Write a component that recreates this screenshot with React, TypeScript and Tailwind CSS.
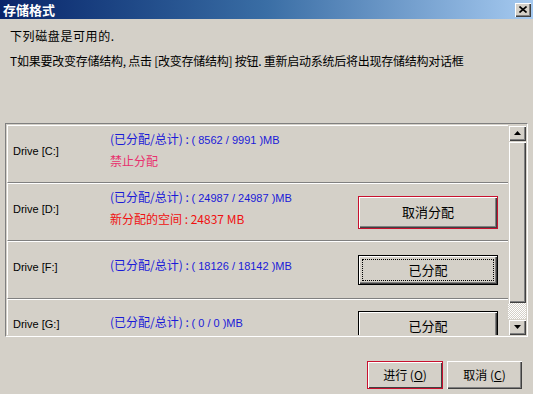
import React from 'react';

const cjk = { fontFamily: '"Noto Sans CJK SC", "Liberation Sans", sans-serif' };
const latin = { fontFamily: '"Liberation Sans", "Noto Sans CJK SC", sans-serif' };

type Drive = {
  name: string;
  used: string;
  note?: { text: string; tone: 'pink' | 'red' };
  button?: { label: string; kind: 'default' | 'focus' | 'plain' };
};

const drives: Drive[] = [
  { name: 'Drive [C:]', used: '( 8562 / 9991 )MB', note: { text: '禁止分配', tone: 'pink' } },
  {
    name: 'Drive [D:]',
    used: '( 24987 / 24987 )MB',
    note: { text: '新分配的空间 : 24837 MB', tone: 'red' },
    button: { label: '取消分配', kind: 'default' }
  },
  { name: 'Drive [F:]', used: '( 18126 / 18142 )MB', button: { label: '已分配', kind: 'focus' } },
  { name: 'Drive [G:]', used: '( 0 / 0 )MB', button: { label: '已分配', kind: 'plain' } }
];

function WinButton({ label, kind }: { label: string; kind: 'default' | 'focus' | 'plain' }) {
  if (kind === 'default') {
    return (
      <div className="flex h-[33px] w-[140px] items-center justify-center border border-[#c8102e] bg-[#d4d0c8] shadow-[inset_1px_1px_0_#ffffff,inset_-1px_-1px_0_#404040,inset_-2px_-2px_0_#808080]">
        <span className="text-[13px] text-black" style={cjk}>
          {label}
        </span>
      </div>
    );
  }
  return (
    <div className="flex h-[30px] w-[140px] items-center justify-center border border-black bg-[#d4d0c8] p-[3px] shadow-[inset_1px_1px_0_#ffffff,inset_-1px_-1px_0_#404040,inset_-2px_-2px_0_#808080]">
      <div
        className={
          'flex h-full w-full items-center justify-center ' +
          (kind === 'focus' ? 'border border-dotted border-black' : '')
        }
      >
        <span className="text-[13px] text-black" style={cjk}>
          {label}
        </span>
      </div>
    </div>
  );
}

function DriveRow({ drive, last }: { drive: Drive; last?: boolean }) {
  return (
    <div
      className={
        'flex shrink-0 items-center border-l border-t border-l-white border-t-white ' +
        (last ? 'h-[40px] items-start pt-[11px]' : 'h-[58px] border-b border-b-[#808080]')
      }
    >
      <div className="relative top-[-3px] w-[102px] shrink-0 pl-[5px] text-[11px] text-black" style={latin}>
        <span className={last ? 'relative top-[8px]' : ''}>{drive.name}</span>
      </div>
      <div className={'relative flex w-[248px] shrink-0 flex-col gap-[5px] ' + (last ? 'top-[3px]' : 'top-[-5px]')}>
        <div className="text-[12px] leading-[15px] text-[#1a1ad8]" style={cjk}>
          (已分配/总计) : <span style={latin} className="text-[11px]">{drive.used}</span>
        </div>
        {drive.note ? (
          <div
            className={
              'text-[12px] leading-[15px] ' +
              (drive.note.tone === 'pink' ? 'text-[#e8306e]' : 'text-[#f01010]')
            }
            style={cjk}
          >
            {drive.note.text}
          </div>
        ) : null}
      </div>
      {drive.button ? <WinButton label={drive.button.label} kind={drive.button.kind} /> : null}
    </div>
  );
}

function ScrollArrow({ up }: { up?: boolean }) {
  return (
    <div className="flex h-[16px] w-full shrink-0 items-center justify-center bg-[#d4d0c8] shadow-[inset_1px_1px_0_#d4d0c8,inset_2px_2px_0_#ffffff,inset_-1px_-1px_0_#404040,inset_-2px_-2px_0_#808080]">
      <svg width="7" height="4" viewBox="0 0 7 4">
        {up ? <path d="M3.5 0 L7 4 L0 4 Z" fill="#000" /> : <path d="M0 0 L7 0 L3.5 4 Z" fill="#000" />}
      </svg>
    </div>
  );
}

export default function App() {
  return (
    <div className="flex h-[394px] w-[533px] flex-col overflow-hidden bg-[#d4d0c8]">
      <div className="flex h-[19px] shrink-0 items-center justify-between bg-gradient-to-r from-[#0a246a] via-[#3a6ea5] to-[#a6caf0] pl-[3px] pr-[2px]">
        <span className="text-[13px] font-bold leading-none text-white" style={cjk}>
          存储格式
        </span>
        <div className="flex h-[14px] w-[16px] items-center justify-center bg-[#d4d0c8] shadow-[inset_1px_1px_0_#ffffff,inset_-1px_-1px_0_#404040,inset_-2px_-2px_0_#808080]">
          <svg width="8" height="7" viewBox="0 0 8 7">
            <path d="M0.5 0.5 L7.5 6.5 M7.5 0.5 L0.5 6.5" stroke="#000" strokeWidth="1.6" />
          </svg>
        </div>
      </div>

      <div className="flex flex-col gap-[9px] pl-[10px] pt-[9px]">
        <div className="text-[12px] leading-[16px] tracking-[0.6px] text-black" style={cjk}>
          下列磁盘是可用的.
        </div>
        <div className="text-[12px] leading-[16px] tracking-[-0.25px] text-black" style={cjk}>
          T如果要改变存储结构, 点击 [改变存储结构] 按钮. 重新启动系统后将出现存储结构对话框
        </div>
      </div>

      <div className="ml-[5px] mt-[54px] flex h-[214px] w-[523px] shrink-0 border border-b-white border-l-[#808080] border-r-white border-t-[#808080] p-[1px]">
        <div className="flex min-w-0 flex-1 flex-col overflow-hidden">
          {drives.map((d, i) => (
            <DriveRow key={d.name} drive={d} last={i === drives.length - 1} />
          ))}
        </div>
        <div className="flex w-[18px] shrink-0 flex-col">
          <ScrollArrow up />
          <div className="h-[162px] shrink-0 bg-[#d4d0c8] shadow-[inset_1px_1px_0_#d4d0c8,inset_2px_2px_0_#ffffff,inset_-1px_-1px_0_#404040,inset_-2px_-2px_0_#808080]" />
          <div className="flex-1 bg-[repeating-conic-gradient(#ffffff_0_25%,#d4d0c8_0_50%)] bg-[length:2px_2px]" />
          <ScrollArrow />
        </div>
      </div>

      <div className="mt-[24px] flex justify-end gap-[4px] pr-[11px]">
        <div className="flex h-[28px] w-[76px] items-center justify-center border border-[#c8102e] bg-[#d4d0c8] shadow-[inset_1px_1px_0_#ffffff,inset_-1px_-1px_0_#404040]">
          <span className="text-[12px] text-black" style={cjk}>
            进行 (<span className="underline">O</span>)
          </span>
        </div>
        <div className="flex h-[28px] w-[75px] items-center justify-center bg-[#d4d0c8] shadow-[inset_1px_1px_0_#ffffff,inset_-1px_-1px_0_#404040,inset_-2px_-2px_0_#808080]">
          <span className="text-[12px] text-black" style={cjk}>
            取消 (<span className="underline">C</span>)
          </span>
        </div>
      </div>
    </div>
  );
}
